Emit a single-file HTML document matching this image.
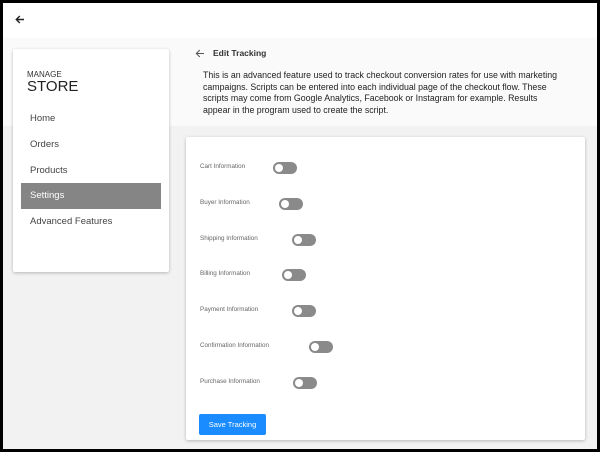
<!DOCTYPE html>
<html><head><style>
*{margin:0;padding:0;box-sizing:border-box}
body{width:600px;height:452px;background:#000;font-family:"Liberation Sans",sans-serif;position:relative;overflow:hidden}
.frame{position:absolute;left:3px;top:3px;width:594px;height:446px;background:#f2f2f2;overflow:hidden}
.top{position:absolute;left:0;top:0;width:594px;height:35px;background:#fff}
.band{position:absolute;left:0;top:35px;width:594px;height:88px;background:#fafafa}
.side{position:absolute;left:10px;top:46px;width:156px;height:223px;background:#fff;box-shadow:0 1px 3px rgba(0,0,0,.25);border-radius:2px}
.side .m{position:absolute;left:14px;top:21px;font-size:8px;color:#333}
.side .s{position:absolute;left:14px;top:29px;font-size:15px;color:#222}
.nav{position:absolute;left:8px;width:140px;height:26px;line-height:26px;padding-left:9px;font-size:9.5px;color:#444}
.nav.on{background:#858585;color:#fff}
.card{position:absolute;left:183px;top:134px;width:399px;height:303px;background:#fff;box-shadow:0 1px 3px rgba(0,0,0,.25);border-radius:2px}
.lbl{position:absolute;left:14px;font-size:6.3px;color:#666}
.tg{position:absolute;width:24px;height:12px;border-radius:6px;background:#8a8a8a}
.tg:after{content:"";position:absolute;left:2px;top:2px;width:8px;height:8px;border-radius:50%;background:#fff}
.btn{position:absolute;left:13px;top:277px;width:67px;height:21px;background:#1a8cff;color:#fff;font-size:7.5px;line-height:21px;text-align:center;border-radius:2px}
.desc{position:absolute;font-size:8.8px;line-height:11.5px;color:#222;white-space:nowrap}
</style></head><body>
<div class="frame">
<div class="top"></div>
<div class="band"></div>
<svg style="position:absolute;left:12px;top:12px" width="10" height="9" viewBox="0 0 10 9"><path d="M9 4.5H1.5M4.8 1L1.3 4.5 4.8 8" stroke="#222" stroke-width="1.4" fill="none"/></svg>
<svg style="position:absolute;left:192px;top:46px" width="10" height="9" viewBox="0 0 10 9"><path d="M9 4.5H1.5M4.8 1L1.3 4.5 4.8 8" stroke="#555" stroke-width="1" fill="none"/></svg>
<div style="position:absolute;left:210px;top:45px;font-size:8.5px;font-weight:bold;color:#333">Edit Tracking</div>
<div class="desc" style="left:200px;top:67px">This is an advanced feature used to track checkout conversion rates for use with marketing<br>campaigns. Scripts can be entered into each individual page of the checkout flow. These<br>scripts may come from Google Analytics, Facebook or Instagram for example. Results<br>appear in the program used to create the script.</div>
<div class="side">
<div class="m">MANAGE</div><div class="s">STORE</div>
<div class="nav" style="top:57px">Home</div>
<div class="nav" style="top:83px">Orders</div>
<div class="nav" style="top:109px">Products</div>
<div class="nav on" style="top:134px">Settings</div>
<div class="nav" style="top:160px">Advanced Features</div>
</div>
<div class="card">
<div class="lbl" style="top:26px">Cart Information</div><div class="tg" style="left:87px;top:25px"></div>
<div class="lbl" style="top:62px">Buyer Information</div><div class="tg" style="left:93px;top:61px"></div>
<div class="lbl" style="top:98px">Shipping Information</div><div class="tg" style="left:106px;top:97px"></div>
<div class="lbl" style="top:133px">Billing Information</div><div class="tg" style="left:96px;top:132px"></div>
<div class="lbl" style="top:169px">Payment Information</div><div class="tg" style="left:106px;top:168px"></div>
<div class="lbl" style="top:205px">Confirmation Information</div><div class="tg" style="left:123px;top:204px"></div>
<div class="lbl" style="top:241px">Purchase Information</div><div class="tg" style="left:107px;top:240px"></div>
<div class="btn">Save Tracking</div>
</div>
</div>
</body></html>
